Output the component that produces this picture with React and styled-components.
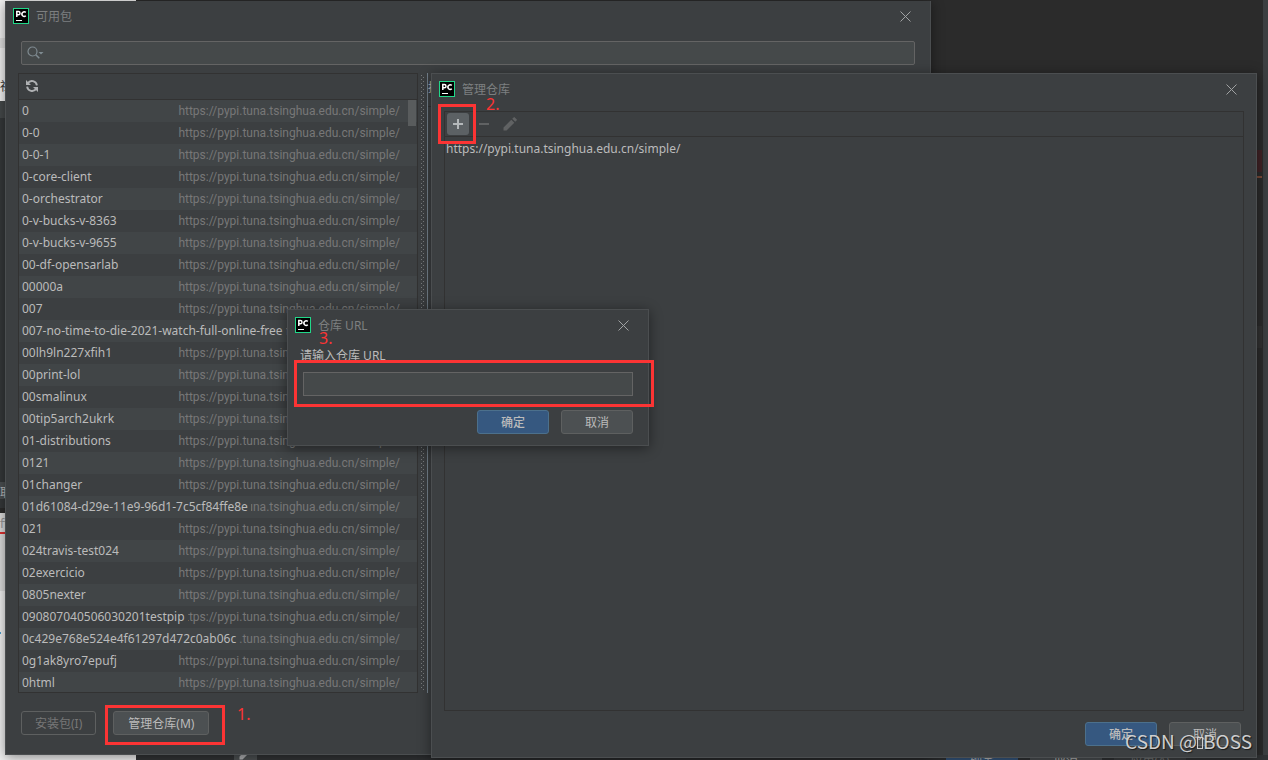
import styled, { createGlobalStyle, css } from "styled-components";

const GlobalStyle = createGlobalStyle`
	* {
		box-sizing: border-box;
	}

	body {
		margin: 0;
		background-color: #2b2b2b;
		color: #bbbbbb;
		font-family: "Noto Sans", "Noto Sans CJK SC", sans-serif;
		font-size: 12px;
		line-height: 22px;
	}

	button,
	input {
		font: inherit;
	}
`;

const packages = [
	"0",
	"0-0",
	"0-0-1",
	"0-core-client",
	"0-orchestrator",
	"0-v-bucks-v-8363",
	"0-v-bucks-v-9655",
	"00-df-opensarlab",
	"00000a",
	"007",
	"007-no-time-to-die-2021-watch-full-online-free",
	"00lh9ln227xfih1",
	"00print-lol",
	"00smalinux",
	"00tip5arch2ukrk",
	"01-distributions",
	"0121",
	"01changer",
	"01d61084-d29e-11e9-96d1-7c5cf84ffe8e",
	"021",
	"024travis-test024",
	"02exercicio",
	"0805nexter",
	"090807040506030201testpip",
	"0c429e768e524e4f61297d472c0ab06c",
	"0g1ak8yro7epufj",
	"0html",
];

const repository = "https://pypi.tuna.tsinghua.edu.cn/simple/";

const Desktop = styled.main`
	position: relative;
	height: 100vh;
	min-height: 560px;
	overflow: hidden;
	background-color: #2b2b2b;
`;

/* what shows of the editor and browser behind the dialogs */
const Behind = styled.div`
	position: absolute;
	left: ${(props) => props.$left};
	right: ${(props) => props.$right};
	top: ${(props) => props.$top};
	bottom: ${(props) => props.$bottom};
	width: ${(props) => props.$width};
	height: ${(props) => props.$height};
	background-color: ${(props) => props.$color};
	color: ${(props) => props.$text};
	overflow: hidden;
	white-space: nowrap;
`;

const BehindBar = styled.div`
	position: absolute;
	left: 136px;
	right: 0;
	bottom: 0;
	height: 5px;
	padding: 0 82px 0 98px;
	display: flex;
	align-items: flex-start;
	gap: 12px;
	overflow: hidden;
	background-color: #313335;
`;

const BehindTool = styled.div`
	display: flex;
	justify-content: center;
	width: 23px;
	height: 5px;
	margin-right: auto;
	background-color: #4c5052;
	color: #afb1b3;
	overflow: hidden;

	svg {
		flex: none;
		margin-top: -9px;
	}
`;

const BehindButton = styled.div`
	flex: none;
	width: 72px;
	height: 24px;
	margin-top: -5px;
	text-align: center;
	color: ${(props) => (props.$faded ? "#777777" : "#bbbbbb")};
	background-color: ${(props) => props.$color};
`;

const Window = styled.section`
	position: absolute;
	display: flex;
	flex-direction: column;
	border: 1px solid #4b4e50;
	background-color: #3c3f41;
	box-shadow: 0 2px 12px rgba(0, 0, 0, 0.45);
`;

const PackagesWindow = styled(Window)`
	top: 1px;
	left: 5px;
	right: 337px;
	bottom: 5px;
	border-top: none;
`;

const RepositoriesWindow = styled(Window)`
	top: 73px;
	left: 431px;
	right: 11px;
	bottom: 2px;
`;

const UrlWindow = styled(Window)`
	top: 309px;
	left: 287px;
	width: 362px;
`;

const TitleBar = styled.header`
	display: flex;
	align-items: center;
	flex: none;
	height: 30px;
	padding: 0 19px 0 7px;
`;

const Title = styled.h1`
	flex: 1;
	margin: 0 0 0 7px;
	padding-top: 2px;
	font-size: 12px;
	font-weight: 400;
	color: #7d7f80;
`;

const CloseButton = styled.button`
	display: flex;
	padding: 0;
	border: none;
	background: none;
	color: #a0a2a3;
`;

const SearchBox = styled.label`
	display: flex;
	align-items: center;
	flex: none;
	height: 24px;
	margin: 10px 15px 8px;
	padding: 0 5px;
	border: 1px solid #646464;
	border-radius: 2px;
	background-color: #45494a;
`;

const SearchInput = styled.input`
	flex: 1;
	min-width: 0;
	border: none;
	outline: none;
	background: none;
	color: #bbbbbb;
`;

const Columns = styled.div`
	display: flex;
	flex: 1;
	min-height: 0;
	padding-left: 12px;
`;

const ListPanel = styled.div`
	display: flex;
	flex-direction: column;
	flex: none;
	width: 400px;
	border: 1px solid #323232;
`;

const ListToolbar = styled.div`
	display: flex;
	align-items: center;
	flex: none;
	height: 26px;
	padding: 0 2px 1px;
	border-bottom: 1px solid #323232;
`;

const ToolButton = styled.button`
	display: flex;
	align-items: center;
	justify-content: center;
	width: 22px;
	height: 22px;
	padding: 0;
	border: none;
	border-radius: 3px;
	background-color: ${(props) => (props.$active ? "#5c6164" : "transparent")};
	color: ${(props) => (props.disabled ? "#606263" : "#b4b8ba")};
`;

const ListScroll = styled.div`
	position: relative;
	flex: 1;
	min-height: 0;
	overflow: hidden;
`;

const ScrollThumb = styled.div`
	position: absolute;
	top: 0;
	right: 1px;
	width: 8px;
	height: 26px;
	background-color: #595c5d;
`;

const PackageTable = styled.table`
	display: block;
`;

const PackageBody = styled.tbody`
	display: block;
`;

const PackageRow = styled.tr`
	display: flex;
	height: 22px;
	padding: 0 17px 0 3px;

	&:nth-child(odd) {
		background-color: #414547;
	}
`;

const PackageName = styled.td`
	flex: none;
	padding: 0;
	white-space: nowrap;
`;

const PackageSource = styled.td`
	display: flex;
	flex: 1;
	justify-content: flex-end;
	min-width: 0;
	margin-left: 3px;
	padding: 0;
	overflow: hidden;
	white-space: nowrap;
	font-family: Roboto, sans-serif;
	color: #777777;
`;

/* two staggered columns of dots */
const Splitter = styled.div`
	flex: none;
	width: 3px;
	margin: 2px 3px;
	background-image: linear-gradient(#777a7c 1px, transparent 1px),
		linear-gradient(#777a7c 1px, transparent 1px);
	background-position: 0 0, 2px 2px;
	background-repeat: repeat-y;
	background-size: 1px 4px;
`;

const Details = styled.div`
	flex: 1;
	min-width: 0;
	border-left: 1px solid #74818c;
	overflow: hidden;
`;

const DetailsTitle = styled.div`
	height: 34px;
	padding-top: 4px;
	border-bottom: 1px solid #323232;
`;

const Footer = styled.footer`
	display: flex;
	flex: none;
	gap: ${(props) => props.$gap};
	justify-content: ${(props) => (props.$end ? "flex-end" : "flex-start")};
	padding: ${(props) => props.$padding};
`;

const Button = styled.button`
	min-width: 72px;
	height: 24px;
	padding: 2px 14px 0;
	border: 1px solid #5e6060;
	border-radius: 3px;
	background-color: #4c5052;
	color: #bbbbbb;
	line-height: 20px;

	&:disabled {
		padding: 2px 13px 0;
		background-color: #3c3f41;
		color: #777777;
	}

	${(props) =>
		props.$primary &&
		css`
			border-color: #4c708c;
			background-color: #365880;
			font-weight: 500;
		`}
`;

const RepositoryPanel = styled.div`
	flex: 1;
	min-height: 0;
	margin: 7px 12px 0;
	border: 1px solid #323232;
`;

const RepositoryToolbar = styled.div`
	display: flex;
	align-items: center;
	gap: 4px;
	height: 25px;
	padding-left: 2px;
	border-bottom: 1px solid #323232;
`;

const RepositoryList = styled.ul`
	margin: 0;
	padding: 1px;
	list-style: none;
`;

const UrlForm = styled.form`
	padding: 5px 15px 11px;
`;

const UrlLabel = styled.label`
	display: block;
	margin-left: -3px;
`;

const UrlInput = styled.input`
	display: block;
	width: 100%;
	height: 24px;
	margin: 5px 0 14px;
	padding: 0 6px;
	border: 1px solid #646464;
	outline: none;
	background-color: #45494a;
	color: #bbbbbb;
`;

const Marker = styled.div`
	position: absolute;
	left: ${(props) => props.$left};
	top: ${(props) => props.$top};
	bottom: ${(props) => props.$bottom};
	width: ${(props) => props.$width};
	height: ${(props) => props.$height};
	border: 3px solid #fc3434;
	pointer-events: none;
`;

const MarkerNumber = styled.span`
	position: absolute;
	left: ${(props) => props.$left};
	top: ${(props) => props.$top};
	bottom: ${(props) => props.$bottom};
	font-size: 16px;
	color: #fc3434;
`;

const Watermark = styled.div`
	position: absolute;
	right: 16px;
	bottom: 7px;
	font-size: 19px;
	line-height: 24px;
	font-family: "Noto Sans CJK SC", sans-serif;
	color: #cfcfcf;
	text-shadow: 1px 1px 1px rgba(0, 0, 0, 0.6);
`;

const WatermarkBox = styled.span`
	display: inline-block;
	width: 6px;
	height: 12px;
	border: 1px solid #cfcfcf;
`;

const PyCharmLogo = () => (
	<svg width="16" height="16" viewBox="0 0 16 16" aria-hidden="true">
		<rect width="16" height="16" fill="#21d789" />
		<rect x="1" y="1" width="14" height="14" fill="#000000" />
		<path d="M3 12h6v1H3z" fill="#ffffff" />
		<path
			d="M3.8 9V3.6h1.6a1.5 1.5 0 0 1 0 3.2H3.8M12.8 4.4a2.3 2.3 0 1 0 0 3.4"
			fill="none"
			stroke="#ffffff"
			strokeWidth="1.5"
		/>
	</svg>
);

const CloseIcon = () => (
	<svg width="11" height="11" viewBox="0 0 11 11" aria-hidden="true">
		<path d="M.5.5l10 10M10.5.5l-10 10" stroke="currentColor" />
	</svg>
);

const SearchIcon = () => (
	<svg width="17" height="14" viewBox="0 0 17 14" aria-hidden="true">
		<circle cx="5.5" cy="5.5" r="4.5" fill="none" stroke="#7f8b91" strokeWidth="1.2" />
		<path d="M8.8 8.8l3.5 3.5" stroke="#7f8b91" strokeWidth="1.5" />
		<path d="M11.5 6h5L14 8.6z" fill="#7f8b91" />
	</svg>
);

const RefreshIcon = () => (
	<svg width="14" height="14" viewBox="0 0 14 14" aria-hidden="true">
		<path
			d="M2.8 4.2a5 5 0 0 1 9.1 2.1M11.2 9.8a5 5 0 0 1-9.1-2.1"
			fill="none"
			stroke="#afb1b3"
			strokeWidth="1.9"
		/>
		<path d="M1 1v5h5zM13 13V8H8z" fill="#afb1b3" />
	</svg>
);

const PlusIcon = () => (
	<svg width="10" height="10" viewBox="0 0 10 10" aria-hidden="true">
		<path d="M4 0h2v4h4v2H6v4H4V6H0V4h4z" fill="currentColor" />
	</svg>
);

const MinusIcon = () => (
	<svg width="10" height="10" viewBox="0 0 10 10" aria-hidden="true">
		<path d="M0 4h10v2H0z" fill="currentColor" />
	</svg>
);

const PencilIcon = () => (
	<svg width="14" height="14" viewBox="0 0 14 14" aria-hidden="true">
		<path
			d="M.5 10.5l7.8-7.8 3 3-7.8 7.8h-3zM9.2 1.8L10.6.4q.6-.6 1.2 0l1.8 1.8q.6.6 0 1.2l-1.4 1.4z"
			fill="currentColor"
		/>
	</svg>
);

const WindowTitle = ({ children }) => (
	<TitleBar>
		<PyCharmLogo />
		<Title>{children}</Title>
		<CloseButton type="button" aria-label="关闭">
			<CloseIcon />
		</CloseButton>
	</TitleBar>
);

const AvailablePackages = () => (
	<PackagesWindow>
		<WindowTitle>可用包</WindowTitle>
		<SearchBox>
			<SearchIcon />
			<SearchInput type="text" aria-label="搜索" />
		</SearchBox>
		<Columns>
			<ListPanel>
				<ListToolbar>
					<ToolButton type="button" aria-label="刷新">
						<RefreshIcon />
					</ToolButton>
				</ListToolbar>
				<ListScroll>
					<PackageTable>
						<PackageBody>
							{packages.map((name) => (
								<PackageRow key={name}>
									<PackageName>{name}</PackageName>
									<PackageSource>{repository}</PackageSource>
								</PackageRow>
							))}
						</PackageBody>
					</PackageTable>
					<ScrollThumb />
				</ListScroll>
			</ListPanel>
			<Splitter />
			<Details>
				<DetailsTitle>描述</DetailsTitle>
			</Details>
		</Columns>
		<Footer $gap="17px" $padding="18px 15px 19px">
			<Button type="button" disabled>
				安装包(I)
			</Button>
			<Button type="button">管理仓库(M)</Button>
		</Footer>
	</PackagesWindow>
);

const ManageRepositories = () => (
	<RepositoriesWindow>
		<WindowTitle>管理仓库</WindowTitle>
		<RepositoryPanel>
			<RepositoryToolbar>
				<ToolButton type="button" aria-label="添加" $active>
					<PlusIcon />
				</ToolButton>
				<ToolButton type="button" aria-label="移除" disabled>
					<MinusIcon />
				</ToolButton>
				<ToolButton type="button" aria-label="编辑" disabled>
					<PencilIcon />
				</ToolButton>
			</RepositoryToolbar>
			<RepositoryList>
				<li>{repository}</li>
			</RepositoryList>
		</RepositoryPanel>
		<Footer $end $gap="12px" $padding="11px 15px 11px">
			<Button type="button" $primary>
				确定
			</Button>
			<Button type="button">取消</Button>
		</Footer>
	</RepositoriesWindow>
);

const RepositoryUrl = () => (
	<UrlWindow>
		<WindowTitle>仓库 URL</WindowTitle>
		<UrlForm onSubmit={(e) => e.preventDefault()}>
			<UrlLabel htmlFor="repository-url">请输入仓库 URL</UrlLabel>
			<UrlInput id="repository-url" type="text" />
			<Footer $end $gap="12px" $padding="0">
				<Button type="submit" $primary>
					确定
				</Button>
				<Button type="button">取消</Button>
			</Footer>
		</UrlForm>
	</UrlWindow>
);

const App = () => {
	return (
		<Desktop>
			<GlobalStyle />
			<Behind $left="0" $top="0" $width="136px" $height="101px" $color="#f2f2f2" />
			<Behind $left="0" $top="38px" $width="6px" $height="10px" $color="#e0e0e0" />
			<Behind $left="0" $top="76px" $width="6px" $height="22px" $text="#333333">
				社
			</Behind>
			<Behind $left="0" $top="101px" $width="6px" $height="17px" $color="#45494a" />
			<Behind $left="0" $top="118px" $width="6px" $height="390px" $color="#35383a" />
			<Behind $left="0" $top="482px" $width="6px" $height="17px" $color="#4c5052">
				取
			</Behind>
			<Behind $left="0" $top="513px" $bottom="0" $width="136px" $color="#f2f2f2" />
			<Behind $left="0" $top="513px" $width="6px" $height="78px" $color="#dedede" $text="#999999">
				ff
			</Behind>
			<Behind $left="0" $top="532px" $width="6px" $height="2px" $color="#e03030" />
			<Behind $left="0" $top="632px" $width="1px" $height="2px" $color="#4a9fd0" />
			<Behind $right="6px" $top="150px" $width="6px" $height="22px" $color="#402326" />
			<Behind $right="6px" $top="176px" $width="6px" $height="2px" $color="#7a4a38" />
			<Behind $right="6px" $top="326px" $width="6px" $height="22px" $color="#323232" />
			<Behind $right="0" $top="0" $bottom="0" $width="5px" $color="#3c3f41" />
			<BehindBar>
				<BehindTool>
					<PencilIcon />
				</BehindTool>
				<BehindButton $color="#365880">确定</BehindButton>
				<BehindButton $color="#4c5052">取消</BehindButton>
				<BehindButton $color="#3c3f41" $faded>
					应用(A)
				</BehindButton>
			</BehindBar>
			<AvailablePackages />
			<ManageRepositories />
			<RepositoryUrl />
			<Marker $left="105px" $bottom="15px" $width="120px" $height="40px" />
			<MarkerNumber $left="237px" $bottom="35px">
				1.
			</MarkerNumber>
			<Marker $left="438px" $top="104px" $width="38px" $height="40px" />
			<MarkerNumber $left="486px" $top="93px">
				2.
			</MarkerNumber>
			<Marker $left="294px" $top="360px" $width="360px" $height="47px" />
			<MarkerNumber $left="319px" $top="327px">
				3.
			</MarkerNumber>
			<Watermark>
				CSDN @<WatermarkBox />
				BOSS
			</Watermark>
		</Desktop>
	);
};

export default App;
